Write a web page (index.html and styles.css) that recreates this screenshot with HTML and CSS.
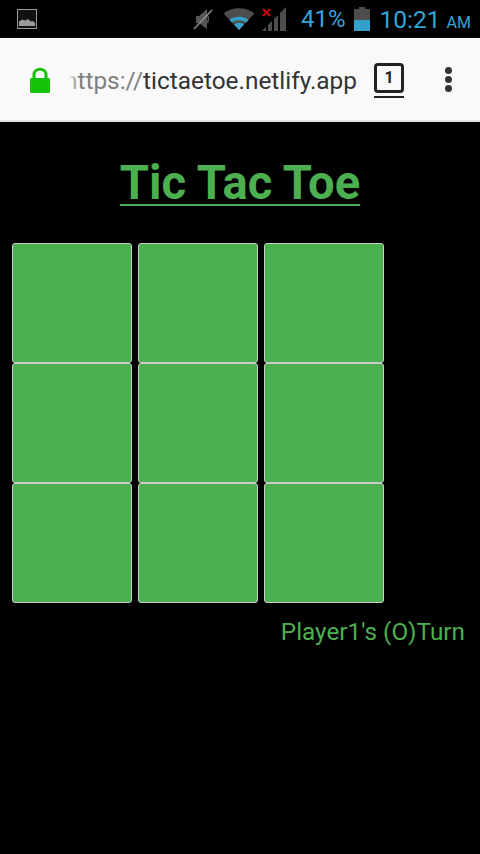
FILE: index.html
```html
<!DOCTYPE html>
<html lang="en">
  <head>
    <meta charset="UTF-8" />
    <meta name="viewport" content="width=device-width, initial-scale=1.0" />
    <title>Tic Tac Toe</title>
    <link rel="stylesheet" href="styles.css">
  </head>
  <body>
    <header class="status-bar">
      <svg class="pic-icon" width="20" height="20" viewBox="0 0 20 20">
        <rect x="0.5" y="0.5" width="19" height="19" fill="#111" stroke="#9a9a9a" />
        <path d="M2 17V12.5L5 10.5L8 11.5L11 10L14 12.5L16 12L18 14V17Z" fill="#9a9a9a" />
      </svg>
      <div class="status-right">
        <svg class="mute-icon" width="20" height="22" viewBox="0 0 20 22">
          <path d="M3 8H6L14 1V21L6 15H3Z" fill="#555" />
          <path d="M14 7C16 9 16 13 14 15" fill="none" stroke="#555" stroke-width="1.500" />
          <path d="M1 21L19 2" stroke="#8a8a8a" stroke-width="1.600" />
        </svg>
        <svg class="wifi-icon" width="32" height="24" viewBox="0 0 32 24">
          <path d="M0.500 6.500C9 -0.500 23 -0.500 31.500 6.500L16 23Z" fill="#4d4d4d" />
          <path d="M6.500 13C11.500 8.700 20.500 8.700 25.500 13L23 15.700C19 12.500 13 12.500 9 15.700Z" fill="#33a0cc" />
          <path d="M11 17.500C14 15.300 18 15.300 21 17.500L16 23Z" fill="#33a0cc" />
        </svg>
        <svg class="signal-icon" width="26" height="26" viewBox="0 0 26 26">
          <path d="M0 25L4 21V25ZM6 25V19L10 15V25ZM12 25V13L16 9V25ZM18 25V7L24 1V25Z" fill="#4d4d4d" />
          <path d="M1 3L8 10M8 3L1 10" stroke="#c40d0d" stroke-width="2" />
        </svg>
        <span class="battery-pct">41%</span>
        <svg class="battery-icon" width="16" height="24" viewBox="0 0 16 24">
          <path d="M5 0H11V2H16V24H0V2H5Z" fill="#4d4d4d" />
          <rect y="13" width="16" height="11" fill="#33a0cc" />
        </svg>
        <span class="clock">10:21<small>AM</small></span>
      </div>
    </header>

    <div class="browser-bar">
      <svg class="lock-icon" width="22" height="28" viewBox="0 0 22 28">
        <path d="M5 13V8.500C5 1.500 17 1.500 17 8.500V13" fill="none" stroke="#16c10a" stroke-width="3" />
        <rect x="1" y="12" width="20" height="15" rx="1.500" fill="#16c10a" />
      </svg>
      <div class="url"><span class="url-scheme">https://</span>tictaetoe.netlify.app</div>
      <div class="tabs-button">
        <span class="tabs-count">1</span>
      </div>
      <div class="menu-dots"><i></i><i></i><i></i></div>
    </div>

    <main>
      <h1 class="title">Tic Tac Toe</h1>
      <div class="board">
        <div class="cell"></div>
        <div class="cell"></div>
        <div class="cell"></div>
        <div class="cell"></div>
        <div class="cell"></div>
        <div class="cell"></div>
        <div class="cell"></div>
        <div class="cell"></div>
        <div class="cell"></div>
      </div>
      <p class="turn">Player1's (O)Turn</p>
    </main>
  </body>
</html>
```

FILE: styles.css
```css
html,
body {
  height: 100%;
}
body {
  margin: 0;
  background-color: #000;
  font-family: Roboto, sans-serif;
  overflow: hidden;
}
.status-bar {
  height: 38px;
  display: flex;
  align-items: center;
  justify-content: space-between;
  padding: 0 9px 0 17px;
  box-sizing: border-box;
}
.status-right {
  display: flex;
  align-items: center;
  color: #33a5d8;
}
.mute-icon {
  margin-right: 10px;
}
.wifi-icon {
  margin-right: 7px;
}
.signal-icon {
  margin-right: 13px;
}
.battery-pct {
  font-size: 24px;
  margin-right: 8px;
}
.battery-icon {
  margin-right: 10px;
}
.clock {
  font-size: 24.500px;
}
.clock small {
  font-size: 16px;
  margin-left: 6px;
}
.browser-bar {
  height: 84px;
  display: flex;
  align-items: center;
  background-color: #f9f9f9;
  border-bottom: 2px solid #e4e4e4;
  box-sizing: border-box;
  padding: 0 0 0 29px;
}
.lock-icon {
  flex: none;
  margin-right: 15px;
  margin-top: 2px;
}
.url {
  position: relative;
  width: 292px;
  margin-top: 3px;
  font-size: 24.400px;
  line-height: 32px;
  color: #333;
  white-space: nowrap;
  overflow: hidden;
  flex: none;
  text-indent: -2px;
}
.url::before {
  content: "";
  position: absolute;
  left: 0;
  top: 0;
  bottom: 0;
  width: 12px;
  background: linear-gradient(to right, #f9f9f9 25%, rgba(249, 249, 249, 0));
}
.url-scheme {
  color: #808080;
}
.tabs-button {
  flex: none;
  margin-left: 16px;
  margin-top: 3px;
  width: 30px;
  height: 35px;
  box-sizing: border-box;
  border-bottom: 2px solid #222;
}
.tabs-count {
  display: block;
  width: 30px;
  height: 30px;
  box-sizing: border-box;
  border: 3px solid #222;
  border-radius: 4px;
  font-size: 16px;
  font-weight: 700;
  line-height: 24px;
  text-align: center;
  color: #222;
}
.menu-dots {
  flex: none;
  margin-left: 41px;
  margin-top: 0;
  display: flex;
  flex-direction: column;
  gap: 2px;
}
.menu-dots i {
  display: block;
  width: 7px;
  height: 7px;
  border-radius: 50%;
  background-color: #333;
}
.title {
  margin: 0;
  padding-top: 32px;
  height: 121px;
  box-sizing: border-box;
  text-align: center;
  font-size: 47.200px;
  line-height: 58px;
  font-weight: 700;
  color: #4caf50;
  text-decoration: underline;
  text-decoration-thickness: 2px;
  text-underline-offset: 5px;
}
.board {
  display: grid;
  grid-template-columns: repeat(3, 120px);
  grid-auto-rows: 120px;
  column-gap: 6px;
  padding-left: 12px;
}
.cell {
  background-color: #4caf50;
  border: 1px solid #ccc;
  border-radius: 3px;
  box-sizing: border-box;
}
.turn {
  margin: 14px 15px 0 0;
  text-align: right;
  font-size: 24.300px;
  line-height: 30px;
  color: #4caf50;
}
```
